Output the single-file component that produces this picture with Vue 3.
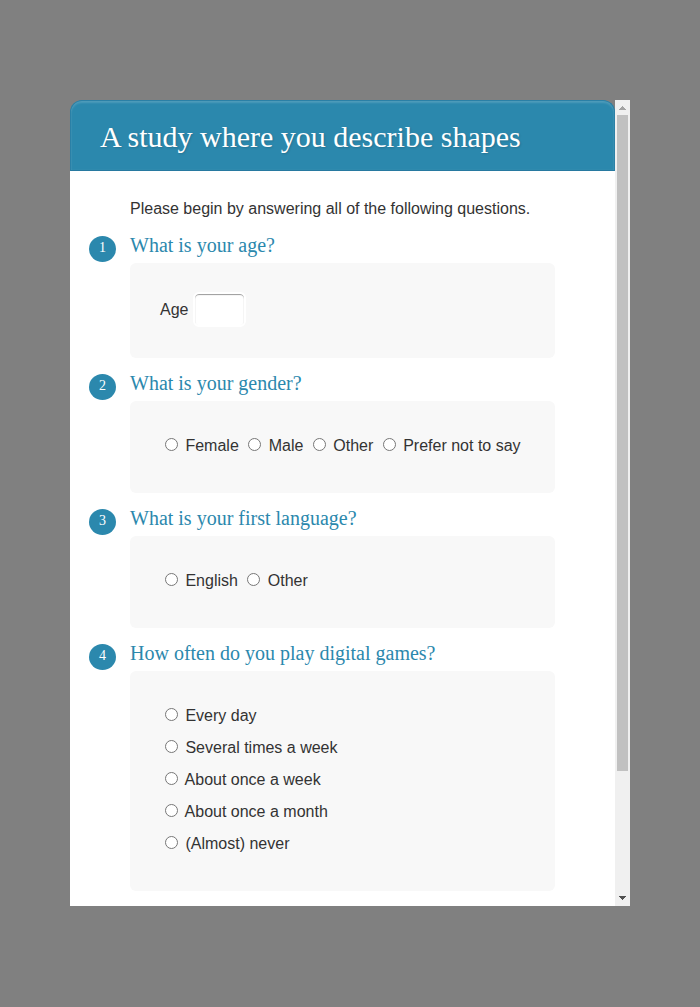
<script setup>
import { ref } from 'vue'

const age = ref('')
const answers = ref({})

const questions = [
  { id: 'age', title: 'What is your age?', type: 'text', label: 'Age' },
  {
    id: 'gender',
    title: 'What is your gender?',
    type: 'inline',
    options: ['Female', 'Male', 'Other', 'Prefer not to say'],
  },
  {
    id: 'language',
    title: 'What is your first language?',
    type: 'inline',
    options: ['English', 'Other'],
  },
  {
    id: 'games',
    title: 'How often do you play digital games?',
    type: 'stacked',
    options: ['Every day', 'Several times a week', 'About once a week', 'About once a month', '(Almost) never'],
  },
]
</script>

<template>
  <div class="backdrop">
    <div class="dialog">
      <main class="page">
        <header class="banner">
          <h1>A study where you describe shapes</h1>
        </header>
        <form class="survey" @submit.prevent>
          <p class="intro">Please begin by answering all of the following questions.</p>
          <section v-for="(q, index) in questions" :key="q.id" class="question">
            <span class="number">{{ index + 1 }}</span>
            <h2 :id="q.id + '-title'">{{ q.title }}</h2>
            <div v-if="q.type === 'text'" class="answers">
              <label :for="q.id">{{ q.label }}</label>&#32;<input :id="q.id" v-model="age" class="entry" type="text" />
            </div>
            <div v-else class="answers" :class="q.type" role="radiogroup" :aria-labelledby="q.id + '-title'">
              <template v-for="option in q.options" :key="option">
                <label class="option"><input v-model="answers[q.id]" type="radio" :name="q.id" :value="option" />&#32;{{ option }}</label>{{ ' ' }}
              </template>
            </div>
          </section>
        </form>
      </main>
      <div class="scrollbar" aria-hidden="true">
        <svg class="arrow" viewBox="0 0 15 15" shape-rendering="crispEdges">
          <path d="M7 6h1v1h1v1h1v1h1v1H4V9h1V8h1V7h1z" fill="#a3a3a3" />
        </svg>
        <div class="track"><div class="thumb"></div></div>
        <svg class="arrow" viewBox="0 0 15 15" shape-rendering="crispEdges">
          <path d="M4 5h7v1h-1v1H9v1H8v1H7V8H6V7H5V6H4z" fill="#505050" />
        </svg>
      </div>
    </div>
  </div>
</template>

<style>
body {
  background: #808080;
}
</style>

<style scoped>
.backdrop {
  box-sizing: border-box;
  min-height: 100vh;
  padding: 100px 10%;
  display: flex;
  background: #808080;
  color: #333;
  font: 16px/32px "Liberation Sans", Arial, sans-serif;
}
.dialog {
  flex: 1;
  display: flex;
  min-width: 0;
  margin-bottom: 1px;
}
.page {
  flex: 1;
  min-width: 0;
  background: linear-gradient(transparent 24px, #fff 24px);
}
.banner {
  padding: 17px 29px 15px;
  border: 1px solid #2b80a6;
  border-bottom-color: #2779a0;
  border-radius: 12px 12px 0 0;
  background: #2b88ad;
  box-shadow: inset 0 2px 2px rgba(255, 255, 255, 0.15), inset 0 0 1px rgba(255, 255, 255, 0.2);
}
h1,
h2 {
  margin: 0;
  font-family: "Liberation Serif", "Times New Roman", serif;
  font-weight: 400;
}
h1 {
  color: #fff;
  font-size: 30px;
  line-height: 37px;
  text-shadow: 1px 1px 2px rgba(0, 0, 0, 0.15);
}
.survey {
  padding: 22px 60px 15px;
}
.intro {
  margin: 0 0 10px;
}
.question {
  position: relative;
}
.question + .question {
  margin-top: 15px;
}
.number {
  position: absolute;
  top: 1px;
  left: -41px;
  width: 27px;
  height: 26px;
  border-radius: 50%;
  background: #2b88ad;
  color: #fff;
  font: 14px/24px "Liberation Serif", "Times New Roman", serif;
  text-align: center;
}
h2 {
  padding-bottom: 8px;
  color: #2b88ad;
  font-size: 20px;
  line-height: 20px;
}
.answers {
  padding: 29px 30px 31px;
  border-radius: 6px;
  background: #f8f8f8;
}
.stacked .option {
  display: block;
}
.entry {
  box-sizing: border-box;
  width: 53px;
  height: 35px;
  margin: 0;
  padding: 6px;
  border: 2px solid #fff;
  border-radius: 6px;
  background: #fff;
  box-shadow: inset 0 1px 1px #999;
  color: #333;
  font: inherit;
}
.option {
  margin-right: 0;
}
.option input {
  margin: 3px 3px 0 5px;
}
.scrollbar {
  flex: none;
  width: 15px;
  display: flex;
  flex-direction: column;
  background: #f0f0f0;
}
.arrow {
  display: block;
  width: 15px;
  height: 15px;
}
.track {
  flex: 1;
  padding: 0 2px;
}
.thumb {
  height: 84.5%;
  background: #c1c1c1;
}
</style>
